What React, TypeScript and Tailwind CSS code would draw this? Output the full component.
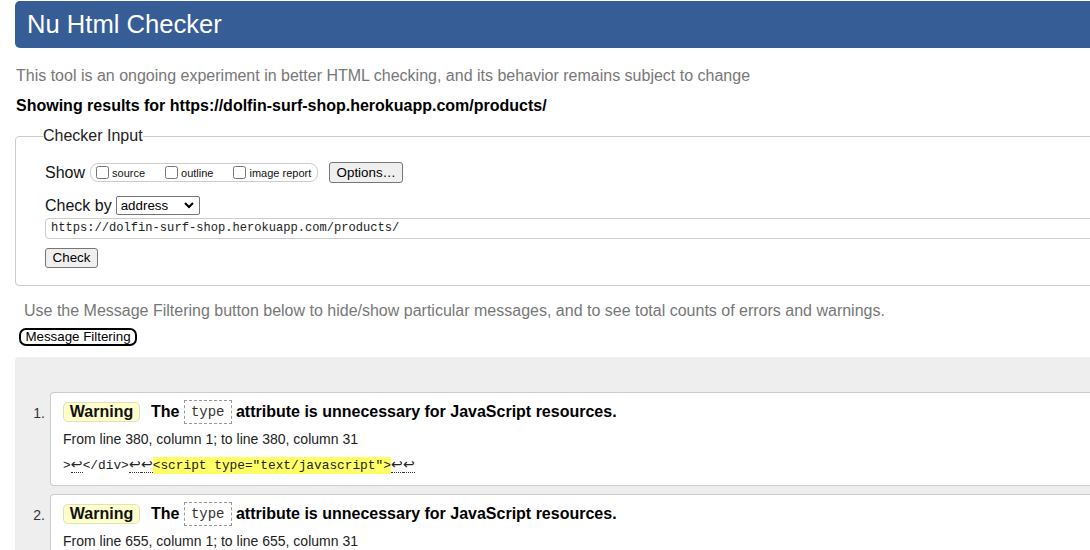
import React from 'react';

const messages = [
  { n: 1, line: 380 },
  { n: 2, line: 655 },
];

function Header() {
  return (
    <h1 className="mt-[1px] ml-[15px] h-[47px] pl-[12px] flex items-center rounded-[5px] bg-[#365d95] text-white text-[25.6px] font-normal">
      Nu Html Checker
    </h1>
  );
}

function Box({ label }: { label: string }) {
  return (
    <label className="flex items-center">
      <input type="checkbox" className="m-0 w-[13px] h-[13px]" />
      <span className="ml-[3px] pt-[2px] text-[11px] leading-[13px]">{label}</span>
    </label>
  );
}

function CheckerInput() {
  return (
    <fieldset className="mt-[10px] ml-[15px] w-[1170px] border border-[#cccccc] rounded-[4px] pl-[29px] pt-[16px] pb-[17px]">
      <legend className="-ml-[2px] text-[16px] leading-[20px] text-[#222]">Checker Input</legend>

      {/* show options */}
      <div className="flex items-center h-[21px]">
        <span className="text-[16px] leading-[20px]">Show</span>
        <div className="ml-[5px] h-[19px] flex items-center gap-[20px] border border-[#cccccc] rounded-[8px] pl-[5px] pr-[6px]">
          <Box label="source" />
          <Box label="outline" />
          <Box label="image report" />
        </div>
        <button className="ml-[11px] h-[21px] w-[74px] border border-[#767676] rounded-[3px] bg-[#efefef] text-[13.33px] leading-[19px] text-black">
          Options…
        </button>
      </div>

      {/* check by */}
      <div className="mt-[13px] flex items-center h-[19px]">
        <span className="text-[16px] leading-[20px]">Check by</span>
        <div className="ml-[4px] h-[19px] w-[84px] flex items-center justify-between border border-[#767676] rounded-[2px] bg-white pl-[4px] pr-[5px] text-[13.33px] text-black">
          <span>address</span>
          <svg width="10" height="7" viewBox="0 0 10 7">
            <polyline points="1,1 5,5 9,1" fill="none" stroke="#000" strokeWidth="2" />
          </svg>
        </div>
      </div>

      <div className="mt-[3px] h-[21px] w-[1150px] flex items-center border border-[#cccccc] rounded-[4px] pl-[5px] font-['Liberation_Mono','DejaVu_Sans_Mono',monospace] text-[12.1px] text-[#222]">
        https://dolfin-surf-shop.herokuapp.com/products/
      </div>

      <button className="mt-[9px] block h-[20px] w-[53px] border border-[#767676] rounded-[3px] bg-[#efefef] text-[13.33px] leading-[18px] text-black">
        Check
      </button>
    </fieldset>
  );
}

function Lf() {
  return (
    <span className="inline-block w-[12px] text-center text-[14px] leading-[15px] border-b border-dotted border-[#333] font-['DejaVu_Sans',sans-serif]">↩</span>
  );
}

function MessageItem({ n, line }: { n: number; line: number }) {
  return (
    <li className="flex">
      <span className="w-[35px] pr-[5px] pt-[11px] text-right text-[14px] leading-[20px] text-[#333]">{n}.</span>
      <div className="flex-1 bg-white border border-r-0 border-[#cccccc] rounded-l-[4px] pl-[12px] pt-[7px] pb-[9px]">
        <div className="flex items-center h-[24px]">
          <strong className="h-[20px] w-[77px] flex items-center justify-center rounded-[5px] border border-[#e2e0b5] bg-[#ffffcc] text-[16px] font-bold">
            Warning
          </strong>
          <p className="ml-[11px] text-[16px] leading-[24px] font-bold text-black whitespace-nowrap">
            The{' '}
            <code className="inline-block align-middle -mt-[2px] h-[24px] px-[6px] leading-[22px] border border-dashed border-[#999] font-normal text-[14px] text-[#333] font-['Liberation_Mono','DejaVu_Sans_Mono',monospace]">
              type
            </code>{' '}
            attribute is unnecessary for JavaScript resources.
          </p>
        </div>
        <p className="mt-[5px] text-[14px] leading-[20px] text-[#222]">
          From line {line}, column 1; to line {line}, column 31
        </p>
        <p className="mt-[7px] text-[12.8px] leading-[20px] text-[#222] whitespace-pre font-['Liberation_Mono','DejaVu_Sans_Mono',monospace]">
          {'>'}
          <Lf />
          {'</div>'}
          <Lf />
          <Lf />
          <b className="font-normal bg-[#ffff66] py-[1px]">{'<script type="text/javascript">'}</b>
          <Lf />
          <Lf />
        </p>
      </div>
    </li>
  );
}

export default function App() {
  return (
    <div className="w-[1090px] h-[550px] overflow-hidden bg-white">
      <div className="w-[1200px] text-[#111] font-['Liberation_Sans',Arial,sans-serif]">
        <Header />
        <p className="mt-[18px] ml-[16px] text-[16px] leading-[20px] text-[#777]">
          This tool is an ongoing experiment in better HTML checking, and its behavior remains subject to change
        </p>
        <p className="mt-[10px] ml-[16px] text-[16px] leading-[20px] font-bold text-black">
          Showing results for https://dolfin-surf-shop.herokuapp.com/products/
        </p>

        <CheckerInput />

        <p className="mt-[15px] ml-[24px] text-[16px] leading-[20px] text-[#777]">
          Use the Message Filtering button below to hide/show particular messages, and to see total counts of errors and warnings.
        </p>
        <button className="mt-[7px] ml-[19px] block h-[18px] w-[118px] border-2 border-black rounded-[7px] bg-white text-[13.33px] leading-[14px] text-black">
          Message Filtering
        </button>

        <div className="mt-[11px] ml-[15px] h-[400px] bg-[#eeeeee] rounded-tl-[4px] pt-[35px]">
          <ol className="flex flex-col gap-[8px]">
            {messages.map(m => (
              <MessageItem key={m.n} n={m.n} line={m.line} />
            ))}
          </ol>
        </div>
      </div>
    </div>
  );
}
